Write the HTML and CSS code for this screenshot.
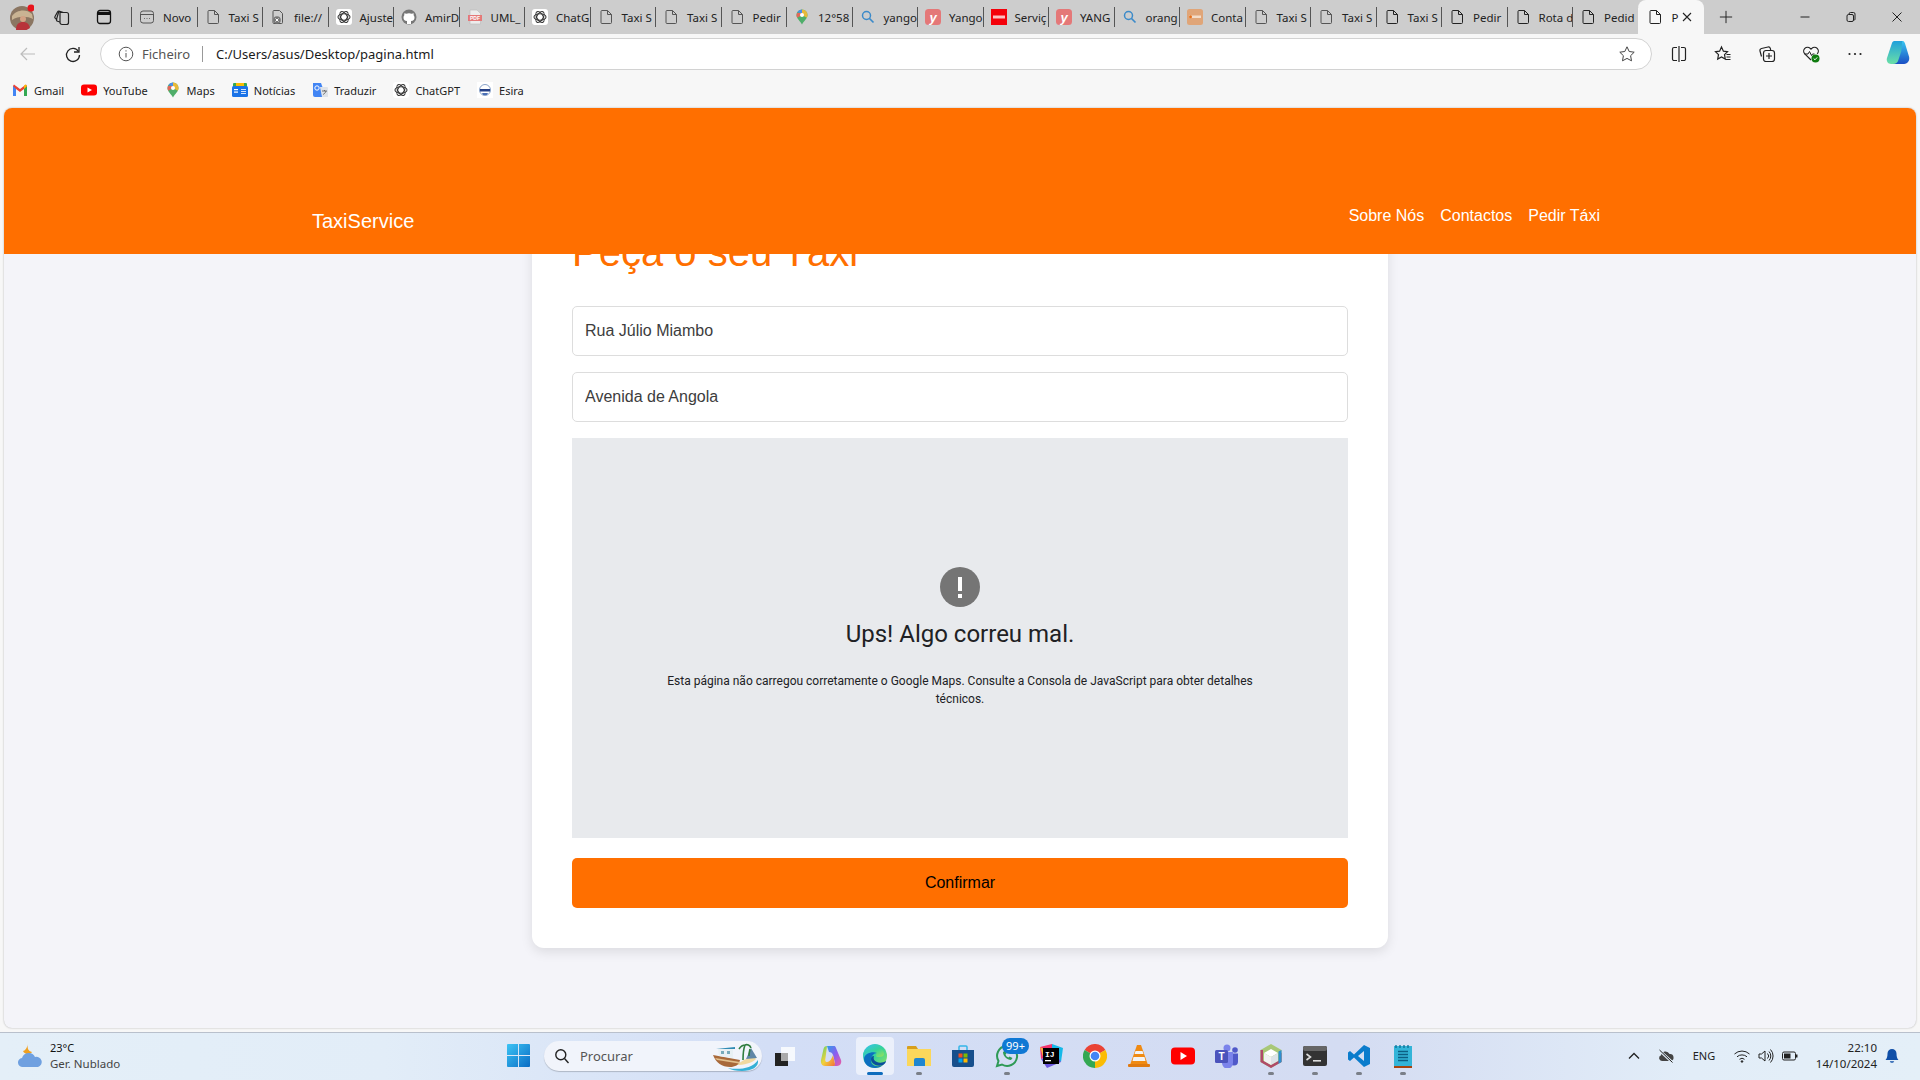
FILE: index.html
```html
<!DOCTYPE html>
<html lang="pt">

<head>
    <meta charset="UTF-8">
    <meta name="viewport" content="width=device-width, initial-scale=1.0">
    <title>Pedir Táxi</title>
    <link rel="stylesheet" href="styles.css">
</head>

<body>
    <svg class="defs" aria-hidden="true">
        <symbol id="i-page" viewBox="0 0 16 16">
            <path d="M3 2.500a1 1 0 0 1 1-1h5.500l4 4v8a1 1 0 0 1-1 1H4a1 1 0 0 1-1-1zM9.500 1.500v4h4" fill="none" stroke="currentColor" stroke-width="1" />
        </symbol>
        <symbol id="i-search" viewBox="0 0 16 16">
            <circle cx="6.500" cy="6.500" r="4" fill="none" stroke="#3b8ac9" stroke-width="1.500" />
            <path d="M9.500 9.500l4 4" stroke="#3b8ac9" stroke-width="1.700" />
        </symbol>
        <symbol id="i-gpt" viewBox="0 0 16 16">
            <rect width="16" height="16" rx="3" fill="#fff" />
            <g fill="none" stroke="#333" stroke-width="1.100">
                <ellipse cx="8" cy="8" rx="6" ry="3.200" />
                <ellipse cx="8" cy="8" rx="6" ry="3.200" transform="rotate(60 8 8)" />
                <ellipse cx="8" cy="8" rx="6" ry="3.200" transform="rotate(120 8 8)" />
            </g>
        </symbol>
        <symbol id="i-mappin" viewBox="0 0 16 16">
            <path d="M8 0.500a5.500 5.500 0 0 0-5.500 5.500c0 3.800 3.700 6 5.500 9.500 1.800-3.500 5.500-5.700 5.500-9.500A5.500 5.500 0 0 0 8 0.500z" fill="#4fae6a" />
            <path d="M3.300 3.200A5.500 5.500 0 0 1 8 0.500v3.500z" fill="#4c8bf0" />
            <path d="M8 0.500a5.500 5.500 0 0 1 5.500 5.500c0 1-.3 1.900-.7 2.700L8 6z" fill="#e8b93a" />
            <path d="M2.500 6c0 1 .3 1.900.7 2.700L8 6V4H3z" fill="#e2675a" />
            <circle cx="8" cy="6" r="2" fill="#fff" />
        </symbol>
    </svg>

    <div class="tabstrip">
        <div class="strip-left">
            <svg class="avatar" viewBox="0 0 24 26">
                <ellipse cx="12" cy="14" rx="12" ry="12" fill="#8b7662" />
                <path d="M2 12c4-6 14-8 20-2l1 5c-6-3-15-3-21 1z" fill="#c9b393" />
                <path d="M6 26c0-6 3-8 7-8s6 2 7 6c-4 3-9 4-14 2z" fill="#b8323a" />
                <circle cx="13" cy="15" r="3" fill="#d3a285" />
                <circle cx="21" cy="4" r="3.500" fill="#e8141c" />
            </svg>
            <svg class="strip-icon" viewBox="0 0 18 18" fill="none" stroke="#222" stroke-width="1.200">
                <path d="M7 4.500h6.500a2 2 0 0 1 2 2v8a2 2 0 0 1-2 2H9a2 2 0 0 1-2-2z" />
                <path d="M7 14l-2.500-.8a1.500 1.500 0 0 1-1-1.900L5.500 4.500a1.500 1.500 0 0 1 1.900-1l3 1" />
                <path d="M4.200 11.500l-1.700-1a1.500 1.500 0 0 1-.5-2l2.500-4.500a1.500 1.500 0 0 1 2-.6" />
            </svg>
            <svg class="strip-icon strip-icon-tabs" viewBox="0 0 18 18" fill="none" stroke="#111">
                <rect x="2.500" y="2.500" width="13" height="13" rx="2.500" stroke-width="1.300" />
                <path d="M2.500 5.500h13" stroke-width="3" />
            </svg>
        </div>
        <div class="tabs">
            <div class="tab">
                <svg class="favicon" viewBox="0 0 16 16" fill="none" stroke="#555">
                    <rect x="1.500" y="2" width="13" height="12" rx="2.500" />
                    <path d="M1.500 5.500h13M5 9.500h.8M7.600 9.500h.8M10.200 9.500h.8" />
                </svg><span>Novo</span>
            </div>
            <div class="tab"><svg class="favicon page-dim"><use href="#i-page" /></svg><span>Taxi S</span></div>
            <div class="tab">
                <svg class="favicon" viewBox="0 0 16 16">
                    <path d="M3 2.500a1 1 0 0 1 1-1h5.500l3 3v9a1 1 0 0 1-1 1H4a1 1 0 0 1-1-1z" fill="none" stroke="#555" />
                    <circle cx="7" cy="11" r="3.800" fill="#777" />
                    <path d="M5.500 9.500l3 3M8.500 9.500l-3 3" stroke="#fff" />
                </svg><span>file://</span>
            </div>
            <div class="tab"><svg class="favicon"><use href="#i-gpt" /></svg><span>Ajuste</span></div>
            <div class="tab">
                <svg class="favicon" viewBox="0 0 16 16">
                    <circle cx="8" cy="8" r="7.500" fill="#777" />
                    <path d="M6 15v-3c-2.500 0-3.500-1.500-3.500-3.500 0-1 .3-1.700.8-2.300L3.300 4.200l2 .6a7 7 0 0 1 5.400 0l2-.6-.1 2c.5.600.9 1.300.9 2.300 0 2-1 3.500-3.500 3.500v3z" fill="#fff" />
                </svg><span>AmirD</span>
            </div>
            <div class="tab">
                <svg class="favicon" viewBox="0 0 16 16">
                    <path d="M3 1h7l3.500 3.500V15H3z" fill="#ececec" stroke="#bbb" stroke-width=".6" />
                    <rect x="1" y="6" width="14" height="6" fill="#e47878" />
                    <text x="8" y="11" class="logo-pdf">PDF</text>
                </svg><span>UML_</span>
            </div>
            <div class="tab"><svg class="favicon"><use href="#i-gpt" /></svg><span>ChatG</span></div>
            <div class="tab"><svg class="favicon page-dim"><use href="#i-page" /></svg><span>Taxi S</span></div>
            <div class="tab"><svg class="favicon page-dim"><use href="#i-page" /></svg><span>Taxi S</span></div>
            <div class="tab"><svg class="favicon page-dim"><use href="#i-page" /></svg><span>Pedir</span></div>
            <div class="tab"><svg class="favicon"><use href="#i-mappin" /></svg><span>12°58</span></div>
            <div class="tab"><svg class="favicon"><use href="#i-search" /></svg><span>yango</span></div>
            <div class="tab">
                <svg class="favicon" viewBox="0 0 16 16">
                    <rect width="16" height="16" rx="3.500" fill="#e47878" />
                    <text x="8" y="12.500" class="logo-y">y</text>
                </svg><span>Yango</span>
            </div>
            <div class="tab">
                <svg class="favicon" viewBox="0 0 16 16">
                    <rect width="16" height="16" fill="#f4000a" />
                    <rect x="2" y="6.500" width="12" height="3" fill="#fff" opacity=".75" />
                </svg><span>Serviç</span>
            </div>
            <div class="tab">
                <svg class="favicon" viewBox="0 0 16 16">
                    <rect width="16" height="16" rx="3.500" fill="#e47878" />
                    <text x="8" y="12.500" class="logo-y">y</text>
                </svg><span>YANG</span>
            </div>
            <div class="tab"><svg class="favicon"><use href="#i-search" /></svg><span>orang</span></div>
            <div class="tab">
                <svg class="favicon" viewBox="0 0 16 16">
                    <rect width="16" height="16" rx="2.500" fill="#e0a578" />
                    <rect x="2" y="6.500" width="12" height="2.500" fill="#f3dcc8" />
                    <circle cx="3.500" cy="7.700" r="1.500" fill="#e8701a" />
                </svg><span>Conta</span>
            </div>
            <div class="tab"><svg class="favicon page-dim"><use href="#i-page" /></svg><span>Taxi S</span></div>
            <div class="tab"><svg class="favicon page-dim"><use href="#i-page" /></svg><span>Taxi S</span></div>
            <div class="tab"><svg class="favicon"><use href="#i-page" /></svg><span>Taxi S</span></div>
            <div class="tab"><svg class="favicon"><use href="#i-page" /></svg><span>Pedir</span></div>
            <div class="tab"><svg class="favicon"><use href="#i-page" /></svg><span>Rota d</span></div>
            <div class="tab"><svg class="favicon"><use href="#i-page" /></svg><span>Pedid</span></div>
        </div>
        <div class="tab-active">
            <svg class="favicon"><use href="#i-page" /></svg>
            <span>P</span>
            <svg class="tab-close" viewBox="0 0 12 12">
                <path d="M2 2l8 8M10 2l-8 8" stroke="#222" stroke-width="1.100" />
            </svg>
        </div>
        <svg class="tab-new" viewBox="0 0 16 16">
            <path d="M8 1v14M1 8h14" stroke="#222" stroke-width="1.100" />
        </svg>
        <div class="window-controls">
            <div class="win-btn"><svg viewBox="0 0 12 12"><path d="M1.500 6h9" stroke="#222" /></svg></div>
            <div class="win-btn">
                <svg viewBox="0 0 12 12" fill="none" stroke="#222">
                    <rect x="2" y="3.500" width="6.500" height="7" rx="1.500" />
                    <path d="M4 3.500v-.5a1.500 1.500 0 0 1 1.500-1.500h3A1.500 1.500 0 0 1 10 3v5a1 1 0 0 1-1.500 1" />
                </svg>
            </div>
            <div class="win-btn"><svg viewBox="0 0 12 12"><path d="M1.500 1.500l9 9M10.500 1.500l-9 9" stroke="#222" /></svg></div>
        </div>
    </div>

    <div class="toolbar">
        <div class="tool-btn">
            <svg viewBox="0 0 18 18" fill="none" stroke="#bcbcbc" stroke-width="1.200"><path d="M16 9H2M8 3L2 9l6 6" /></svg>
        </div>
        <div class="tool-btn">
            <svg viewBox="0 0 18 18" fill="none" stroke="#222" stroke-width="1.300">
                <path d="M14.500 6.500A6.500 6.500 0 1 0 15.500 10" />
                <path d="M15 2v5h-5" />
            </svg>
        </div>
        <div class="address">
            <svg class="addr-info" viewBox="0 0 16 16" fill="none" stroke="#555">
                <circle cx="8" cy="8" r="6.800" />
                <path d="M8 7v4.500M8 4.300v1.200" />
            </svg>
            <span class="addr-label">Ficheiro</span>
            <span class="addr-sep"></span>
            <span class="addr-url">C:/Users/asus/Desktop/pagina.html</span>
            <svg class="addr-star" viewBox="0 0 18 18" fill="none" stroke="#444">
                <path d="M9 1.800l2.200 4.700 5 .7-3.600 3.500.9 5.100L9 13.400l-4.500 2.400.9-5.100L1.800 7.200l5-.7z" />
            </svg>
        </div>
        <div class="tool-right">
            <div class="tool-cell">
                <svg viewBox="0 0 18 18" fill="none" stroke="#222" stroke-width="1.200">
                    <path d="M7 2.500H4a1.500 1.500 0 0 0-1.500 1.500v10A1.500 1.500 0 0 0 4 15.500h3M11 2.500h3A1.500 1.500 0 0 1 15.500 4v10a1.500 1.500 0 0 1-1.500 1.500h-3M9 1v16" />
                </svg>
            </div>
            <div class="tool-cell">
                <svg viewBox="0 0 18 18" fill="none" stroke="#222" stroke-width="1.200">
                    <path d="M7.500 2l1.900 4.200 4.100.5-3 2.900.8 4.400-3.800-2.100-3.800 2.100.8-4.400-3-2.900 4.100-.5zM12.500 9.500h4M12.500 12h4M11 14.500h5.500" />
                </svg>
            </div>
            <div class="tool-cell">
                <svg viewBox="0 0 18 18" fill="none" stroke="#222" stroke-width="1.200">
                    <path d="M3.500 11.500L2 6a2 2 0 0 1 1.500-2.500L10 2a2 2 0 0 1 2.300 1.400l.4 1.600" />
                    <rect x="5.500" y="5.500" width="11" height="11" rx="2.500" />
                    <path d="M11 8v6M8 11h6" />
                </svg>
            </div>
            <div class="tool-cell">
                <svg viewBox="0 0 18 18" fill="none">
                    <path d="M9 15L2.800 8.800a3.800 3.800 0 0 1 5.400-5.400L9 4.200l.8-.8a3.800 3.800 0 0 1 5.400 5.400" stroke="#222" stroke-width="1.200" />
                    <path d="M2.500 9h3.500l1.500-2.500 2 4 1-1.500h2" stroke="#222" />
                    <circle cx="13.500" cy="13.500" r="4" fill="#107c10" />
                    <path d="M11.700 13.500l1.300 1.300 2.200-2.400" stroke="#fff" />
                </svg>
            </div>
            <div class="tool-cell">
                <svg viewBox="0 0 18 18" fill="#222"><circle cx="3.500" cy="9" r="1.100" /><circle cx="9" cy="9" r="1.100" /><circle cx="14.500" cy="9" r="1.100" /></svg>
            </div>
            <div class="tool-cell tool-copilot">
                <svg class="copilot-top" viewBox="0 0 24 28">
                    <defs>
                        <linearGradient id="cp1" x1="0" y1="0" x2="0" y2="1">
                            <stop offset="0" stop-color="#1fa0dc" />
                            <stop offset="1" stop-color="#6be0a6" />
                        </linearGradient>
                        <linearGradient id="cp2" x1="0" y1="0" x2="0" y2="1">
                            <stop offset="0" stop-color="#38c6f0" />
                            <stop offset="1" stop-color="#1b4fc4" />
                        </linearGradient>
                    </defs>
                    <path d="M9 1h7c1 0 1.500.5 2 2l-5 19c-.5 1.500-1.500 2-2.500 2H5C2 24 0 21 1 18L6 3c.5-1.500 1.500-2 3-2z" fill="url(#cp1)" />
                    <path d="M16 1c1.500 0 2.500.8 3 2.500l4 13c1 3.500-1 7.500-5 7.500H7c3 0 4.500-1.500 5-3l3-9c.5-2 1-6 1-11z" fill="url(#cp2)" />
                </svg>
            </div>
        </div>
    </div>

    <div class="bookmarks">
        <div class="bookmark">
            <svg class="bm-icon" viewBox="0 0 16 16">
                <path d="M1 4v10h3V7l4 3 4-3v7h3V4l-1-1.500L8 7 2 2.500z" fill="#ea4335" />
                <path d="M1 4v10h3V7z" fill="#4285f4" />
                <path d="M12 7v7h3V4z" fill="#34a853" />
                <path d="M15 4l-3 3V3.500l1.500-1z" fill="#fbbc04" />
            </svg><span>Gmail</span>
        </div>
        <div class="bookmark">
            <svg class="bm-icon" viewBox="0 0 16 16">
                <rect y="2.500" width="16" height="11" rx="3" fill="#f00" />
                <path d="M6.500 5.500L11 8l-4.500 2.500z" fill="#fff" />
            </svg><span>YouTube</span>
        </div>
        <div class="bookmark"><svg class="bm-icon"><use href="#i-mappin" /></svg><span>Maps</span></div>
        <div class="bookmark">
            <svg class="bm-icon" viewBox="0 0 16 16">
                <rect x="1" y="1" width="14" height="5" rx="1" fill="#34a853" />
                <rect x="4" y="1" width="8" height="3" fill="#fbbc04" />
                <rect y="4" width="16" height="11" rx="1.500" fill="#1a73e8" />
                <rect x="2" y="7" width="4" height="1.200" fill="#fff" />
                <rect x="2" y="9.500" width="4" height="1.200" fill="#fff" />
                <path d="M9 7h5v1H9zM9 9h5v1H9zM9 11h5v1H9z" fill="#d2e3fc" />
            </svg><span>Notícias</span>
        </div>
        <div class="bookmark">
            <svg class="bm-icon" viewBox="0 0 16 16">
                <path d="M1 1h8l5 14H3a2 2 0 0 1-2-2z" fill="#4285f4" />
                <path d="M8 5h7a1 1 0 0 1 1 1v9H10z" fill="#dfe3e8" />
                <circle cx="5" cy="6" r="2.200" fill="none" stroke="#fff" />
                <path d="M10 9h5M12.500 8v1M14 9c-.5 2-2 3-3 3.500" stroke="#555" stroke-width=".8" fill="none" />
            </svg><span>Traduzir</span>
        </div>
        <div class="bookmark"><svg class="bm-icon"><use href="#i-gpt" /></svg><span>ChatGPT</span></div>
        <div class="bookmark">
            <svg class="bm-icon" viewBox="0 0 16 16">
                <rect width="16" height="16" fill="#fff" />
                <circle cx="8" cy="8" r="5.500" fill="none" stroke="#8aa3c9" />
                <path d="M3 7h10v2.500H3z" fill="#243f86" />
                <path d="M5 11h6l-1 2H6z" fill="#4a6fb5" />
            </svg><span>Esira</span>
        </div>
    </div>

    <main class="viewport">
        <header class="site-header">
            <div class="logo">TaxiService</div>
            <nav class="site-nav">
                <a href="#">Sobre Nós</a>
                <a href="#">Contactos</a>
                <a href="#">Pedir Táxi</a>
            </nav>
        </header>

        <section class="content">
            <form class="card">
                <h1>Peça o seu Táxi</h1>
                <input class="field" type="text" value="Rua Júlio Miambo">
                <input class="field" type="text" value="Avenida de Angola">
                <div class="map">
                    <svg class="map-icon" viewBox="0 0 40 40">
                        <circle cx="20" cy="20" r="20" fill="#757575" />
                        <rect x="18" y="10" width="4" height="14" fill="#fff" />
                        <rect x="18" y="27" width="4" height="4" fill="#fff" />
                    </svg>
                    <div class="map-title">Ups! Algo correu mal.</div>
                    <p class="map-text">Esta página não carregou corretamente o Google Maps. Consulte a Consola de JavaScript para obter detalhes técnicos.</p>
                </div>
                <button class="confirm" type="button">Confirmar</button>
            </form>
        </section>
    </main>

    <footer class="taskbar">
        <div class="weather">
            <svg class="weather-icon" viewBox="0 0 25 26">
                <path d="M10 1c-1 4 0 7 4 8-2 3-7 3-9-1 2 0 4-3 5-7z" fill="#f0a020" />
                <path d="M5 24a4.500 4.500 0 0 1-1-9 7 7 0 0 1 13-1 5 5 0 0 1 3 10z" fill="#6fa0e0" />
            </svg>
            <div class="weather-text">
                <div class="weather-temp">23°C</div>
                <div class="weather-desc">Ger. Nublado</div>
            </div>
        </div>
        <div class="tb-cell">
            <svg class="tb-start" viewBox="0 0 24 24">
                <defs>
                    <linearGradient id="win" x1="0" y1="0" x2="1" y2="1">
                        <stop offset="0" stop-color="#3cc4f5" />
                        <stop offset="1" stop-color="#0a6cc4" />
                    </linearGradient>
                </defs>
                <path d="M0 1a1 1 0 0 1 1-1h10.500v11.500H0zM12.500 0H23a1 1 0 0 1 1 1v10.500H12.500zM0 12.500h11.500V24H1a1 1 0 0 1-1-1zM12.500 12.500H24V23a1 1 0 0 1-1 1H12.500z" fill="url(#win)" />
            </svg>
        </div>
        <div class="search">
            <svg class="search-icon" viewBox="0 0 16 16" fill="none" stroke="#222" stroke-width="1.400">
                <circle cx="6.800" cy="6.800" r="5" />
                <path d="M10.500 10.500l4 4.500" />
            </svg>
            <span class="search-text">Procurar</span>
            <svg class="search-art" viewBox="0 0 48 30">
                <path d="M16 27c10 2 24 1 30-8 1 7-6 11-16 11-6 0-11-1-14-3z" fill="#35b0d6" />
                <path d="M24 24c8 0 16-2 20-6l-3-3-9 4z" fill="#f0d9a0" />
                <path d="M34 18l5-11 6 10z" fill="#5f86a6" />
                <path d="M31 19c0-6 .5-11 2-15M27 8c2-3 5-4 6-4 2-1 5 0 6 3M37 15c0-3 .5-5 1-7" stroke="#2f7d3e" stroke-width="1.600" fill="none" />
                <path d="M1 14l27 5c-1 5-5 7-10 7-8 0-14-4-17-12z" fill="#a8693a" />
                <path d="M3 17l25 4-1 1.500L5 19z" fill="#e2c08d" />
                <path d="M6 8h15v9l-14-2z" fill="#e8f0f4" />
                <path d="M4 8l19-2v2H6z" fill="#2f8bb4" />
                <path d="M9 10h3v3H9zM15 10h3v3h-3z" fill="#7ab" />
            </svg>
        </div>
        <div class="tb-cell tb-taskview">
            <svg class="tb-small" viewBox="0 0 20 20">
                <rect x="6" y="1" width="14" height="14" fill="#fff" opacity=".8" />
                <rect y="7" width="13" height="13" fill="#222" />
                <rect x="6" y="7" width="7" height="8" fill="#aaa" />
            </svg>
        </div>
        <div class="tb-cell">
            <svg class="tb-icon" viewBox="0 0 24 24">
                <defs>
                    <linearGradient id="cp3" x1="0" y1="0" x2="1" y2="1">
                        <stop offset="0" stop-color="#2f9ee8" />
                        <stop offset=".5" stop-color="#8b5cf0" />
                        <stop offset="1" stop-color="#ef5ca0" />
                    </linearGradient>
                    <linearGradient id="cp4" x1="0" y1="0" x2="1" y2="1">
                        <stop offset="0" stop-color="#5ad06a" />
                        <stop offset=".5" stop-color="#f2d23a" />
                        <stop offset="1" stop-color="#f2703a" />
                    </linearGradient>
                </defs>
                <path d="M8 2h7c1 0 1.500.5 2 2l5 12c1 3-1 6-4 6h-5c2 0 3-1 3-3l-2-8c-.5-2-2-3-4-3z" fill="url(#cp3)" />
                <path d="M8 2c-2 0-3 1-3.500 3L2 16c-.5 3 1 6 4 6h8c1 0 2-.5 2-2l-2-9c-1 3-3 7-6 7-2 0-2-2-1.500-4z" fill="url(#cp4)" />
            </svg>
        </div>
        <div class="tb-cell tb-active">
            <svg class="tb-icon" viewBox="0 0 24 24">
                <defs>
                    <linearGradient id="edge" x1="0" y1="0" x2="1" y2="1">
                        <stop offset="0" stop-color="#35c1f1" />
                        <stop offset=".5" stop-color="#36d39a" />
                        <stop offset="1" stop-color="#9be25a" />
                    </linearGradient>
                </defs>
                <circle cx="12" cy="12" r="12" fill="url(#edge)" />
                <path d="M0 12C0 5 6 2 11 2c6 0 10 4 10 8 0 2-2 3-5 3-2 0-3-.5-3-1 1-3-1-5-4-5-5 0-9 5-9 5z" fill="url(#edge)" />
                <path d="M1 15c0 5 5 9 11 9 3 0 6-1 8-3-7 3-13 0-12-6 .5-3 3-6 6-6-5-2-13 1-13 6z" fill="#0c6fc0" />
                <path d="M8 15c0 5 6 8 12 6 2-1 3-3 3-4-3 2-7 2-9 1-3-1-4-3-3-6-2 0-3 1-3 3z" fill="#0a4f9c" />
            </svg>
            <span class="tb-dot tb-dot-active"></span>
        </div>
        <div class="tb-cell">
            <svg class="tb-icon" viewBox="0 0 24 24">
                <path d="M0 3a1 1 0 0 1 1-1h8l2 3h-11z" fill="#d89f1c" />
                <path d="M0 5h24v17H0z" fill="#fbd75b" />
                <path d="M7 16a2 2 0 0 1 2-2h7a2 2 0 0 1 2 2v6H7z" fill="#1f86d0" />
            </svg>
            <span class="tb-dot"></span>
        </div>
        <div class="tb-cell">
            <svg class="tb-icon" viewBox="0 0 24 24">
                <path d="M8 6V3a1 1 0 0 1 1-1h6a1 1 0 0 1 1 1v3" fill="none" stroke="#35b5e8" stroke-width="1.500" />
                <path d="M1 6h22v15a2 2 0 0 1-2 2H3a2 2 0 0 1-2-2z" fill="#174f8c" />
                <rect x="7.500" y="9.500" width="4" height="4" fill="#f25022" />
                <rect x="12.500" y="9.500" width="4" height="4" fill="#7fba00" />
                <rect x="7.500" y="14.500" width="4" height="4" fill="#00a4ef" />
                <rect x="12.500" y="14.500" width="4" height="4" fill="#ffb900" />
            </svg>
        </div>
        <div class="tb-cell">
            <svg class="tb-icon" viewBox="0 0 24 24" fill="none">
                <path d="M2 22l1.500-5A10 10 0 1 1 7 20.500z" stroke="#2e9a56" stroke-width="2" />
                <path d="M8 8c0 4 4 8 8 8l1.500-2-3-1.500-1 1c-1.500-.5-2.500-1.500-3-3l1-1L10 6.500z" fill="#2e9a56" />
            </svg>
            <span class="tb-dot"></span>
            <span class="tb-badge">99+</span>
        </div>
        <div class="tb-cell">
            <svg class="tb-icon" viewBox="0 0 24 24">
                <path d="M1 3l12-3 4 10-15 5z" fill="#f2356e" />
                <path d="M13 0l11 4-2 14-9-8z" fill="#15b8e8" />
                <path d="M2 15l15-5 5 8-14 6z" fill="#6b57e0" />
                <path d="M1 3l6 3-2 10z" fill="#fbb03b" />
                <rect x="4" y="4" width="16" height="16" fill="#000" />
                <text x="6" y="12.500" class="logo-ij">IJ</text>
                <rect x="6" y="16" width="6" height="1.300" fill="#fff" />
            </svg>
        </div>
        <div class="tb-cell">
            <svg class="tb-icon" viewBox="0 0 24 24">
                <path d="M12 12L1.600 6A12 12 0 0 1 22.400 6z" fill="#ea4335" />
                <path d="M12 12l10.400-6A12 12 0 0 1 12 24z" fill="#fbbc04" />
                <path d="M12 12v12A12 12 0 0 1 1.600 6z" fill="#34a853" />
                <circle cx="12" cy="12" r="5.500" fill="#fff" />
                <circle cx="12" cy="12" r="4.300" fill="#4285f4" />
            </svg>
        </div>
        <div class="tb-cell">
            <svg class="tb-icon" viewBox="0 0 24 24">
                <path d="M10 1h4l7 20H3z" fill="#f08a12" />
                <path d="M8.500 7h7l1 3h-9zM6.500 13h11l1 4h-13z" fill="#f4f4f4" />
                <rect x="1" y="20" width="22" height="3" rx="1" fill="#e07a10" />
            </svg>
        </div>
        <div class="tb-cell">
            <svg class="tb-icon" viewBox="0 0 24 24">
                <rect y="3.500" width="24" height="17" rx="4" fill="#f00" />
                <path d="M9.500 8l6.500 4-6.500 4z" fill="#fff" />
            </svg>
        </div>
        <div class="tb-cell">
            <svg class="tb-icon" viewBox="0 0 24 24">
                <circle cx="12" cy="4" r="3.500" fill="#7b83eb" />
                <circle cx="20" cy="6" r="2.800" fill="#5059c9" />
                <path d="M15 9.500h8v8a4 4 0 0 1-8 0z" fill="#5059c9" />
                <path d="M7 8h11v11a5.500 5.500 0 0 1-11 0z" fill="#7b83eb" />
                <rect y="6" width="13" height="13" rx="1.500" fill="#4b53bc" />
                <text x="6.500" y="16" class="logo-teams">T</text>
            </svg>
        </div>
        <div class="tb-cell">
            <svg class="tb-icon" viewBox="0 0 24 24">
                <path d="M12 0l10.500 6v12L12 24 1.500 18V6z" fill="#a8c878" />
                <path d="M1.500 6v12L12 24l10.500-6V9l-2.500-1.500V16.500L12 21l-8-4.500V6z" fill="#b04a68" />
                <path d="M22.500 6v12l-3 1.700V7.500z" fill="#2d8fd0" />
                <path d="M12 5l7 4-7 4-7-4z" fill="#fff" />
                <path d="M5 9l7 4v8l-7-4z" fill="#f1f1f1" />
                <path d="M19 9l-7 4v8l7-4z" fill="#dde3e8" />
            </svg>
            <span class="tb-dot"></span>
        </div>
        <div class="tb-cell">
            <svg class="tb-icon" viewBox="0 0 24 24">
                <rect y="2" width="24" height="20" rx="2" fill="#333" />
                <rect y="2" width="24" height="5" rx="2" fill="#666" />
                <path d="M3.500 10l4 3-4 3" fill="none" stroke="#ddd" stroke-width="1.600" />
                <rect x="10" y="16" width="8" height="1.600" fill="#ddd" />
            </svg>
            <span class="tb-dot"></span>
        </div>
        <div class="tb-cell">
            <svg class="tb-icon" viewBox="0 0 24 24">
                <path d="M17 1l6 3v16l-6 3L7 13.500 3 17l-2-1.500V8.500L3 7l4 3.500z" fill="#0a7ccc" />
                <path d="M17 7l-6 5 6 5z" fill="#d5dff3" />
            </svg>
            <span class="tb-dot"></span>
        </div>
        <div class="tb-cell">
            <svg class="tb-icon" viewBox="0 0 24 24">
                <rect x="3" y="2" width="18" height="20" fill="#33b4d8" />
                <path d="M5 1v3M9 1v3M13 1v3M17 1v3" stroke="#0c6f94" stroke-width="1.300" />
                <path d="M7 7.500h10M7 10.500h10M7 13.500h10M7 16.500h10" stroke="#0c5f84" stroke-width="1.400" />
                <rect x="3" y="22" width="18" height="2" fill="#a8440e" />
            </svg>
            <span class="tb-dot"></span>
        </div>
        <div class="tray">
            <div class="tray-cell">
                <svg class="tray-icon" viewBox="0 0 16 16" fill="none" stroke="#222" stroke-width="1.300"><path d="M3 10.500l5-5 5 5" /></svg>
            </div>
            <div class="tray-cell tray-cloud">
                <svg class="tray-icon" viewBox="0 0 16 16">
                    <path d="M4 13a3 3 0 0 1-1-5.800A4.500 4.500 0 0 1 11.500 6 3.500 3.500 0 0 1 12.500 13z" fill="#444" />
                    <path d="M1.500 2.500l13 12" stroke="#e3eef8" stroke-width="2.500" />
                    <path d="M1.500 2l13 12.500" stroke="#222" />
                </svg>
            </div>
            <span class="tray-lang">ENG</span>
            <div class="tray-cell tray-wifi">
                <svg class="tray-icon" viewBox="0 0 16 16" fill="none" stroke="#222">
                    <path d="M.5 6a11 11 0 0 1 15 0M3 8.800a7.500 7.500 0 0 1 10 0M5.500 11.300a3.800 3.800 0 0 1 5 0" />
                    <circle cx="8" cy="13.500" r=".8" fill="#222" />
                </svg>
            </div>
            <div class="tray-cell">
                <svg class="tray-icon" viewBox="0 0 16 16" fill="none" stroke="#222">
                    <path d="M1 6h2.500L7 3v10l-3.500-3H1z" />
                    <path d="M9.500 5.500a3.500 3.500 0 0 1 0 5M11 3.500a6.500 6.500 0 0 1 0 9M12.500 1.500a9.500 9.500 0 0 1 0 13" />
                </svg>
            </div>
            <div class="tray-cell">
                <svg class="tray-icon" viewBox="0 0 16 16">
                    <rect x=".5" y="4" width="13" height="8" rx="1.500" fill="none" stroke="#222" />
                    <rect x="2" y="5.500" width="6.500" height="5" fill="#222" />
                    <rect x="14" y="6.500" width="1.500" height="3" fill="#222" />
                </svg>
            </div>
            <div class="clock">
                <div>22:10</div>
                <div>14/10/2024</div>
            </div>
            <div class="tray-cell tray-bell">
                <svg class="tray-icon" viewBox="0 0 16 16">
                    <path d="M8 1a4.500 4.500 0 0 0-4.500 4.500c0 3-.5 5-2 6.500h13c-1.500-1.500-2-3.500-2-6.500A4.500 4.500 0 0 0 8 1z" fill="#0f4fa8" />
                    <path d="M5.800 13.200a2.300 2.300 0 0 0 4.400 0z" fill="#0f4fa8" />
                </svg>
            </div>
        </div>
    </footer>
</body>

</html>
```

FILE: styles.css
```css
* {
    box-sizing: border-box;
}

html,
body {
    height: 100%;
}

body {
    margin: 0;
    display: flex;
    flex-direction: column;
    overflow: hidden;
    background-color: #f7f7f7;
    color: #222;
    font-family: "Noto Sans", sans-serif;
}

svg {
    display: block;
    flex-shrink: 0;
}

.defs {
    width: 0;
    height: 0;
    position: absolute;
}

.logo-y {
    fill: #fff;
    font: italic 700 13px "Liberation Sans", sans-serif;
    text-anchor: middle;
}

.logo-pdf {
    fill: #fff;
    font: 700 5px "Liberation Sans", sans-serif;
    text-anchor: middle;
}

.logo-ij {
    fill: #fff;
    font: 700 8px "Liberation Mono", monospace;
}

.logo-teams {
    fill: #fff;
    font: 700 10px "Liberation Sans", sans-serif;
    text-anchor: middle;
}

/* browser tabs */
.tabstrip {
    height: 34px;
    flex-shrink: 0;
    display: flex;
    align-items: center;
    background-color: #cdcdcd;
    font-size: 11.5px;
}

.strip-left {
    width: 131px;
    display: flex;
    align-items: center;
    padding-left: 10px;
}

.avatar {
    width: 24px;
    height: 26px;
}

.strip-icon {
    width: 18px;
    height: 18px;
    margin-left: 19px;
}

.strip-icon-tabs {
    margin-left: 24px;
}

.tabs {
    display: flex;
    border-left: 1px solid #555;
    height: 20px;
}

.tab {
    width: 65.5px;
    display: flex;
    align-items: center;
    gap: 8px;
    padding-left: 7px;
    border-right: 1px solid #555;
    overflow: hidden;
    white-space: nowrap;
}

.favicon {
    width: 16px;
    height: 16px;
    color: #222;
}

.page-dim {
    color: #555;
}

.tab-active {
    width: 66px;
    height: 34px;
    margin-left: -1px;
    display: flex;
    align-items: center;
    gap: 9px;
    padding-left: 9px;
    background-color: #f7f7f7;
    border-radius: 8px 8px 0 0;
}

.tab-close {
    width: 12px;
    height: 12px;
    margin-left: -6px;
}

.tab-new {
    width: 14px;
    height: 14px;
    margin-left: 15px;
}

.window-controls {
    display: flex;
    margin-left: auto;
}

.win-btn {
    width: 46px;
    display: flex;
    justify-content: center;
}

.win-btn svg {
    width: 12px;
    height: 12px;
}

/* address bar */
.toolbar {
    height: 39px;
    flex-shrink: 0;
    display: flex;
    align-items: center;
    padding-left: 5px;
}

.tool-btn {
    width: 45px;
    display: flex;
    justify-content: center;
}

.tool-btn svg {
    width: 18px;
    height: 18px;
}

.address {
    width: 1552px;
    height: 32px;
    margin-left: 5px;
    display: flex;
    align-items: center;
    padding: 0 15px 0 17px;
    background-color: #fff;
    border: 1px solid #d2d2d2;
    border-radius: 16px;
    font-size: 13px;
}

.addr-info {
    width: 16px;
    height: 16px;
}

.addr-label {
    margin-left: 8px;
    color: #555;
}

.addr-sep {
    width: 1px;
    height: 16px;
    margin: 0 13px 0 12px;
    background-color: #999;
}

.addr-url {
    color: #1a1a1a;
}

.addr-star {
    width: 18px;
    height: 18px;
    margin-left: auto;
}

.tool-right {
    display: flex;
    margin-left: 5px;
}

.tool-cell {
    width: 44px;
    display: flex;
    justify-content: center;
    align-items: center;
}

.tool-cell svg {
    width: 18px;
    height: 18px;
}

.tool-cell .copilot-top {
    width: 24px;
    height: 28px;
}

.tool-copilot {
    width: 42px;
}

/* bookmarks */
.bookmarks {
    height: 35px;
    flex-shrink: 0;
    display: flex;
    align-items: center;
    gap: 17px;
    padding: 0 0 1px 12px;
    font-size: 11px;
}

.bookmark {
    display: flex;
    align-items: center;
    gap: 6px;
}

.bm-icon {
    width: 16px;
    height: 16px;
}

/* page */
.viewport {
    flex: 1;
    min-height: 0;
    position: relative;
    overflow: hidden;
    margin: 0 4px 4px;
    background-color: #f4f4f9;
    border-radius: 8px;
    box-shadow: 0 0 2px rgba(0, 0, 0, 0.3);
    font-family: "Liberation Sans", Arial, sans-serif;
}

.site-header {
    position: absolute;
    top: 0;
    left: 0;
    right: 0;
    z-index: 10;
    height: 146px;
    display: flex;
    justify-content: space-between;
    align-items: flex-end;
    padding: 0 316px 21px 308px;
    background-color: #ff6f00;
    color: #fff;
}

.logo {
    font-size: 20px;
}

.site-nav {
    display: flex;
    gap: 16px;
    margin-bottom: 8px;
}

.site-nav a {
    color: #fff;
    font-size: 16px;
    text-decoration: none;
}

.content {
    padding-top: 82px;
}

.card {
    width: 856px;
    margin: 0 auto;
    padding: 40px;
    background-color: #fff;
    border-radius: 12px;
    box-shadow: 0 4px 12px rgba(0, 0, 0, 0.1);
}

.card h1 {
    margin: 0 0 31px;
    color: #ff6f00;
    font-size: 40px;
    font-weight: 400;
}

.field {
    display: block;
    width: 100%;
    height: 50px;
    margin-bottom: 16px;
    padding: 0 12px;
    border: 1px solid #ddd;
    border-radius: 5px;
    color: #3d3d3d;
    font-family: inherit;
    font-size: 16px;
}

.map {
    height: 400px;
    margin-bottom: 20px;
    padding-top: 129px;
    display: flex;
    flex-direction: column;
    align-items: center;
    background-color: #e8eaed;
    color: #202124;
    font-family: Roboto, sans-serif;
    text-align: center;
}

.map-icon {
    width: 40px;
    height: 40px;
}

.map-title {
    margin-top: 13px;
    font-size: 24px;
}

.map-text {
    width: 600px;
    margin: 24px 0 0;
    font-size: 12px;
    line-height: 18px;
}

.confirm {
    display: block;
    width: 100%;
    height: 50px;
    border: none;
    border-radius: 5px;
    background-color: #ff6f00;
    color: #000;
    font-family: inherit;
    font-size: 16px;
}

/* windows taskbar */
.taskbar {
    height: 48px;
    flex-shrink: 0;
    display: flex;
    align-items: center;
    padding: 0 0 2px 18px;
    border-top: 1px solid #b9c0cc;
    background: linear-gradient(90deg, #e4eff8 0%, #e2edf8 20%, #d3def6 40%, #d4dcf2 70%, #e2edf8 88%, #e4eff8 100%);
    font-size: 11.5px;
}

.weather {
    width: 478.5px;
    display: flex;
    align-items: center;
    gap: 7px;
}

.weather-icon {
    width: 25px;
    height: 26px;
}

.weather-temp {
    color: #111;
    line-height: 16px;
    font-size: 11px;
}

.weather-desc {
    color: #444;
    line-height: 16px;
}

.tb-cell {
    position: relative;
    width: 44px;
    height: 38px;
    display: flex;
    justify-content: center;
    align-items: center;
}

.tb-start {
    width: 23px;
    height: 23px;
}

.tb-icon {
    width: 24px;
    height: 24px;
}

.tb-small {
    width: 20px;
    height: 24px;
}

.tb-taskview {
    margin: 0 2px 0 1px;
}

.tb-active::before {
    content: "";
    position: absolute;
    top: 0;
    bottom: 0;
    left: 3px;
    right: 3px;
    background-color: rgba(255, 255, 255, 0.55);
    border-radius: 4px;
}

.tb-active svg {
    position: relative;
}

.tb-dot {
    position: absolute;
    left: 19px;
    bottom: 0;
    width: 6px;
    height: 3px;
    border-radius: 2px;
    background-color: #7a7f88;
}

.tb-dot-active {
    left: 14px;
    width: 16px;
    background-color: #0f6cbd;
}

.tb-badge {
    position: absolute;
    top: 1px;
    left: 17px;
    width: 27px;
    height: 16px;
    border-radius: 8px;
    background-color: #0f78d4;
    color: #fff;
    font-size: 11px;
    line-height: 16px;
    text-align: center;
}

.search {
    width: 218px;
    height: 30px;
    margin-left: 3.5px;
    display: flex;
    align-items: center;
    padding: 0 2px 0 10px;
    background-color: #f1f4fb;
    border-radius: 15px;
    box-shadow: 0 1px 1px rgba(0, 0, 0, 0.2);
}

.search-icon {
    width: 16px;
    height: 16px;
}

.search-text {
    margin-left: 10px;
    color: #555;
    font-size: 13px;
}

.search-art {
    width: 48px;
    height: 30px;
    margin-left: auto;
}

.tray {
    display: flex;
    align-items: center;
    margin-left: auto;
    padding-right: 16px;
}

.tray-cell {
    width: 24px;
    display: flex;
    justify-content: center;
}

.tray-icon {
    width: 16px;
    height: 16px;
}

.tray-cloud {
    margin-left: 8px;
}

.tray-lang {
    width: 28px;
    margin-left: 12px;
    font-size: 11px;
    text-align: center;
}

.tray-wifi {
    margin-left: 12px;
}

.clock {
    width: 75px;
    line-height: 16px;
    text-align: right;
}

.tray-bell {
    margin-left: 3px;
}
```
